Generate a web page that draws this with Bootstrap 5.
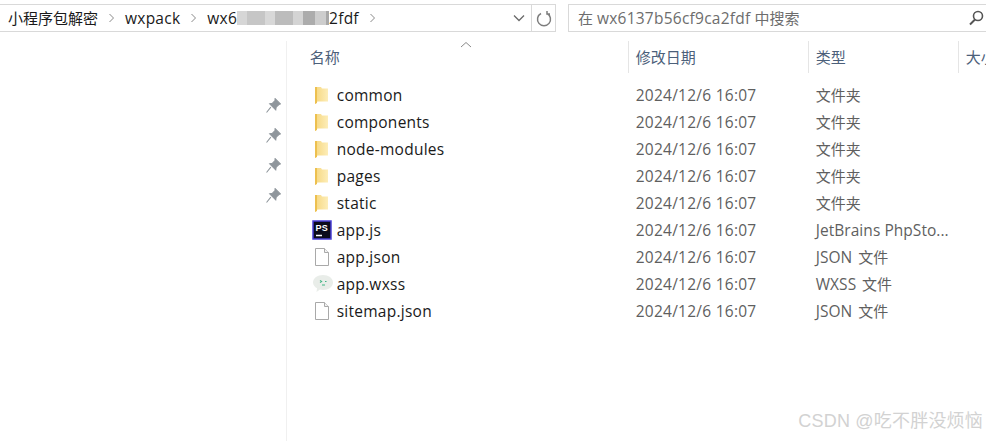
<!DOCTYPE html>
<html lang="zh-CN">
<head>
    <meta charset="UTF-8">
    <title>wxpack</title>
    <link href="https://cdn.jsdelivr.net/npm/bootstrap@5.3.3/dist/css/bootstrap.min.css" rel="stylesheet">
    <style>
        html, body {
            height: 441px;
            overflow: hidden;
        }
        body {
            background: #fff;
            color: #1a1a1a;
            font-family: "Open Sans", "Noto Sans CJK SC", sans-serif;
            font-size: 15px;
            position: relative;
        }
        .lat {
            font-size: 15.5px;
            letter-spacing: .25px;
        }
        .top-bar {
            height: 41px;
            padding-top: 4px;
        }
        .addr-box {
            width: 556px;
            height: 28px;
            border: 1px solid #d9d9d9;
            border-left: 0;
            padding-left: 8px;
        }
        .crumb {
            line-height: 26px;
            white-space: nowrap;
        }
        .crumb-sep {
            width: 27px;
            flex: none;
        }
        .mosaic {
            width: 92px;
            height: 14px;
            flex: none;
            background: linear-gradient(90deg, #d6d6d6 0 10px, #c6c6c6 10px 28px, #d8d8d8 28px 38px, #bcbcbc 38px 56px, #d4d4d4 56px 66px, #acacac 66px 78px, #cdcdcd 78px 89px, #a8a8a8 89px 92px);
        }
        .addr-drop {
            width: 24px;
        }
        .addr-refresh {
            width: 24px;
            height: 26px;
            border-left: 1px solid #d9d9d9;
        }
        .search-box {
            width: 418px;
            height: 28px;
            margin-left: 12px;
            border: 1px solid #d9d9d9;
            border-right: 0;
            padding-left: 9px;
            color: #6d6d6d;
            line-height: 26px;
            white-space: nowrap;
        }
        .side-pane {
            width: 287px;
            height: 400px;
            border-right: 1px solid #f0f0f0;
            padding-top: 57px;
            padding-right: 5px;
        }
        .pin-row {
            height: 30px;
        }
        .head-row {
            height: 32px;
            color: #4c607a;
        }
        .head-cell {
            height: 32px;
            line-height: 33px;
            border-right: 1px solid #e5e5e5;
            padding-left: 7px;
            flex: none;
            overflow: hidden;
            white-space: nowrap;
        }
        .col-name { width: 342px; padding-left: 23px; position: relative; }
        .col-date { width: 180px; }
        .col-kind { width: 150px; }
        .col-size { border-right: 0; width: 28px; }
        .sort-mark {
            position: absolute;
            left: 173px;
            top: 0;
        }
        .file-list {
            padding-top: 9px;
        }
        .file-row {
            height: 27px;
            line-height: 27px;
            white-space: nowrap;
        }
        .file-name {
            width: 342px;
            padding-left: 50px;
            flex: none;
            position: relative;
        }
        .file-icon {
            position: absolute;
            left: 25px;
            top: 3px;
        }
        .file-date { width: 180px; padding-left: 7px; flex: none; color: #5f5f5f; }
        .file-kind { width: 150px; padding-left: 7px; flex: none; color: #5f5f5f; }
        .file-kind .lat { letter-spacing: .05px; }
        .kind-ext { margin-right: 2px; }
        .watermark {
            position: absolute;
            right: 3px;
            bottom: 6px;
            color: #d2d2d2;
            font-size: 18px;
            font-family: "Liberation Sans", "Noto Sans CJK SC", sans-serif;
            letter-spacing: .2px;
        }
    </style>
</head>
<body>
<svg width="0" height="0" class="position-absolute">
    <defs>
        <linearGradient id="folderFill" x1="0" x2="1" y1="0" y2="0">
            <stop offset="0" stop-color="#f6d77f"/>
            <stop offset="1" stop-color="#fdedb8"/>
        </linearGradient>
        <symbol id="ic-folder" viewBox="0 0 20 20">
            <path d="M3 2h6l1 1.500h6V16.500H5.500L3 19z" fill="url(#folderFill)"/>
            <path d="M3 2h2v16L3 19z" fill="#edc04f"/>
        </symbol>
        <symbol id="ic-doc" viewBox="0 0 20 20">
            <path d="M3.500 1.500h9l4 4v13h-13z" fill="#fff" stroke="#a9a9a9"/>
            <path d="M12.500 1.500v4h4" fill="#f2f2f2" stroke="#a9a9a9"/>
        </symbol>
        <symbol id="ic-pin" viewBox="0 0 14 14">
            <path d="M8.500 .5l5 5-1.500 .6-2.500 2.500-.4 2.400-5.600-5.600 2.400-.4 2.500-2.500zM4.500 8.500L.5 13.500" fill="#8f969c" stroke="#8f969c"/>
        </symbol>
    </defs>
</svg>

<div class="top-bar d-flex">
    <div class="addr-box d-flex align-items-center flex-none">
        <span class="crumb">小程序包解密</span>
        <svg class="crumb-sep" width="27" height="10" viewBox="0 0 27 10"><path d="M11.500 1l4 4-4 4" fill="none" stroke="#8a8a8a"/></svg>
        <span class="crumb lat">wxpack</span>
        <svg class="crumb-sep" width="27" height="10" viewBox="0 0 27 10"><path d="M11.500 1l4 4-4 4" fill="none" stroke="#8a8a8a"/></svg>
        <span class="crumb lat">wx6</span>
        <span class="mosaic"></span>
        <span class="crumb lat">2fdf</span>
        <svg class="crumb-sep" width="27" height="10" viewBox="0 0 27 10"><path d="M11.500 1l4 4-4 4" fill="none" stroke="#8a8a8a"/></svg>
        <span class="flex-grow-1"></span>
        <span class="addr-drop d-flex justify-content-center">
            <svg width="12" height="8" viewBox="0 0 12 8"><path d="M1 1.500l5 5 5-5" fill="none" stroke="#6a6a6a" stroke-width="1.300"/></svg>
        </span>
        <span class="addr-refresh d-flex align-items-center justify-content-center">
            <svg width="16" height="17" viewBox="0 0 16 17"><path d="M5 3.500a6.500 6.500 0 1 0 6 0M11 1v3h3" fill="none" stroke="#7d7d7d" stroke-width="1.500"/></svg>
        </span>
    </div>
    <div class="search-box d-flex justify-content-between">
        <span>在 <span class="lat">wx6137b56cf9ca2fdf</span> 中搜索</span>
        <svg class="me-0 mt-1" width="18" height="18" viewBox="0 0 18 18"><circle cx="10" cy="7" r="4.500" fill="none" stroke="#555" stroke-width="1.600"/><path d="M7 10.500L2 15.500" stroke="#555" stroke-width="2"/></svg>
    </div>
</div>

<div class="d-flex">
    <div class="side-pane flex-none">
        <div class="pin-row d-flex justify-content-end"><svg width="15" height="15"><use href="#ic-pin"/></svg></div>
        <div class="pin-row d-flex justify-content-end"><svg width="15" height="15"><use href="#ic-pin"/></svg></div>
        <div class="pin-row d-flex justify-content-end"><svg width="15" height="15"><use href="#ic-pin"/></svg></div>
        <div class="pin-row d-flex justify-content-end"><svg width="15" height="15"><use href="#ic-pin"/></svg></div>
    </div>
    <div class="flex-grow-1 overflow-hidden">
        <div class="head-row d-flex">
            <div class="head-cell col-name">名称
                <svg class="sort-mark" width="12" height="8" viewBox="0 0 12 8"><path d="M1 6l5-4.500 5 4.500" fill="none" stroke="#8a8a8a"/></svg>
            </div>
            <div class="head-cell col-date">修改日期</div>
            <div class="head-cell col-kind">类型</div>
            <div class="head-cell col-size">大小</div>
        </div>
        <div class="file-list" id="fileList"></div>
    </div>
</div>

<div class="watermark">CSDN @吃不胖没烦恼</div>

<script>
    const files = [
        ['common', 'folder', '文件夹'],
        ['components', 'folder', '文件夹'],
        ['node-modules', 'folder', '文件夹'],
        ['pages', 'folder', '文件夹'],
        ['static', 'folder', '文件夹'],
        ['app.js', 'ps', '<span class="lat">JetBrains PhpSto...</span>'],
        ['app.json', 'doc', '<span class="lat kind-ext">JSON</span> 文件'],
        ['app.wxss', 'wx', '<span class="lat kind-ext">WXSS</span> 文件'],
        ['sitemap.json', 'doc', '<span class="lat kind-ext">JSON</span> 文件']
    ];
    const icons = {
        folder: '<svg class="file-icon" width="20" height="20"><use href="#ic-folder"/></svg>',
        doc: '<svg class="file-icon" width="20" height="20"><use href="#ic-doc"/></svg>',
        ps: '<svg class="file-icon" width="20" height="20" viewBox="0 0 20 20"><rect x="1" y="1" width="18" height="18" fill="#0b0b1a" stroke="#4a3fd6" stroke-width="1.500"/><text x="3.500" y="11" fill="#fff" font-size="9" font-weight="700" font-family="Liberation Sans">PS</text><path d="M4 15.500h6" stroke="#fff" stroke-width="1.500"/></svg>',
        wx: '<svg class="file-icon" width="22" height="20" viewBox="0 0 22 20"><path d="M11 1c5.500 0 10 3 10 7.500s-4.500 7.500-10 7.500c-1 0-2-.1-3-.4L4.500 18l.5-3.700C2.800 13 1 11 1 8.500 1 4 5.500 1 11 1z" fill="#e9ede9"/><path d="M8 6.500l1.500 1L8 8.500M13 7.500h1.500M10 11h3" fill="none" stroke="#3fb583" stroke-width="1.200"/></svg>'
    };
    // 文件列表
    document.getElementById('fileList').innerHTML = files.map(f => `<div class="file-row d-flex">
        <div class="file-name lat">${icons[f[1]]}${f[0]}</div>
        <div class="file-date lat">2024/12/6 16:07</div>
        <div class="file-kind">${f[2]}</div>
    </div>`).join('');
</script>
<script src="https://cdn.jsdelivr.net/npm/bootstrap@5.3.3/dist/js/bootstrap.bundle.min.js"></script>
</body>
</html>
